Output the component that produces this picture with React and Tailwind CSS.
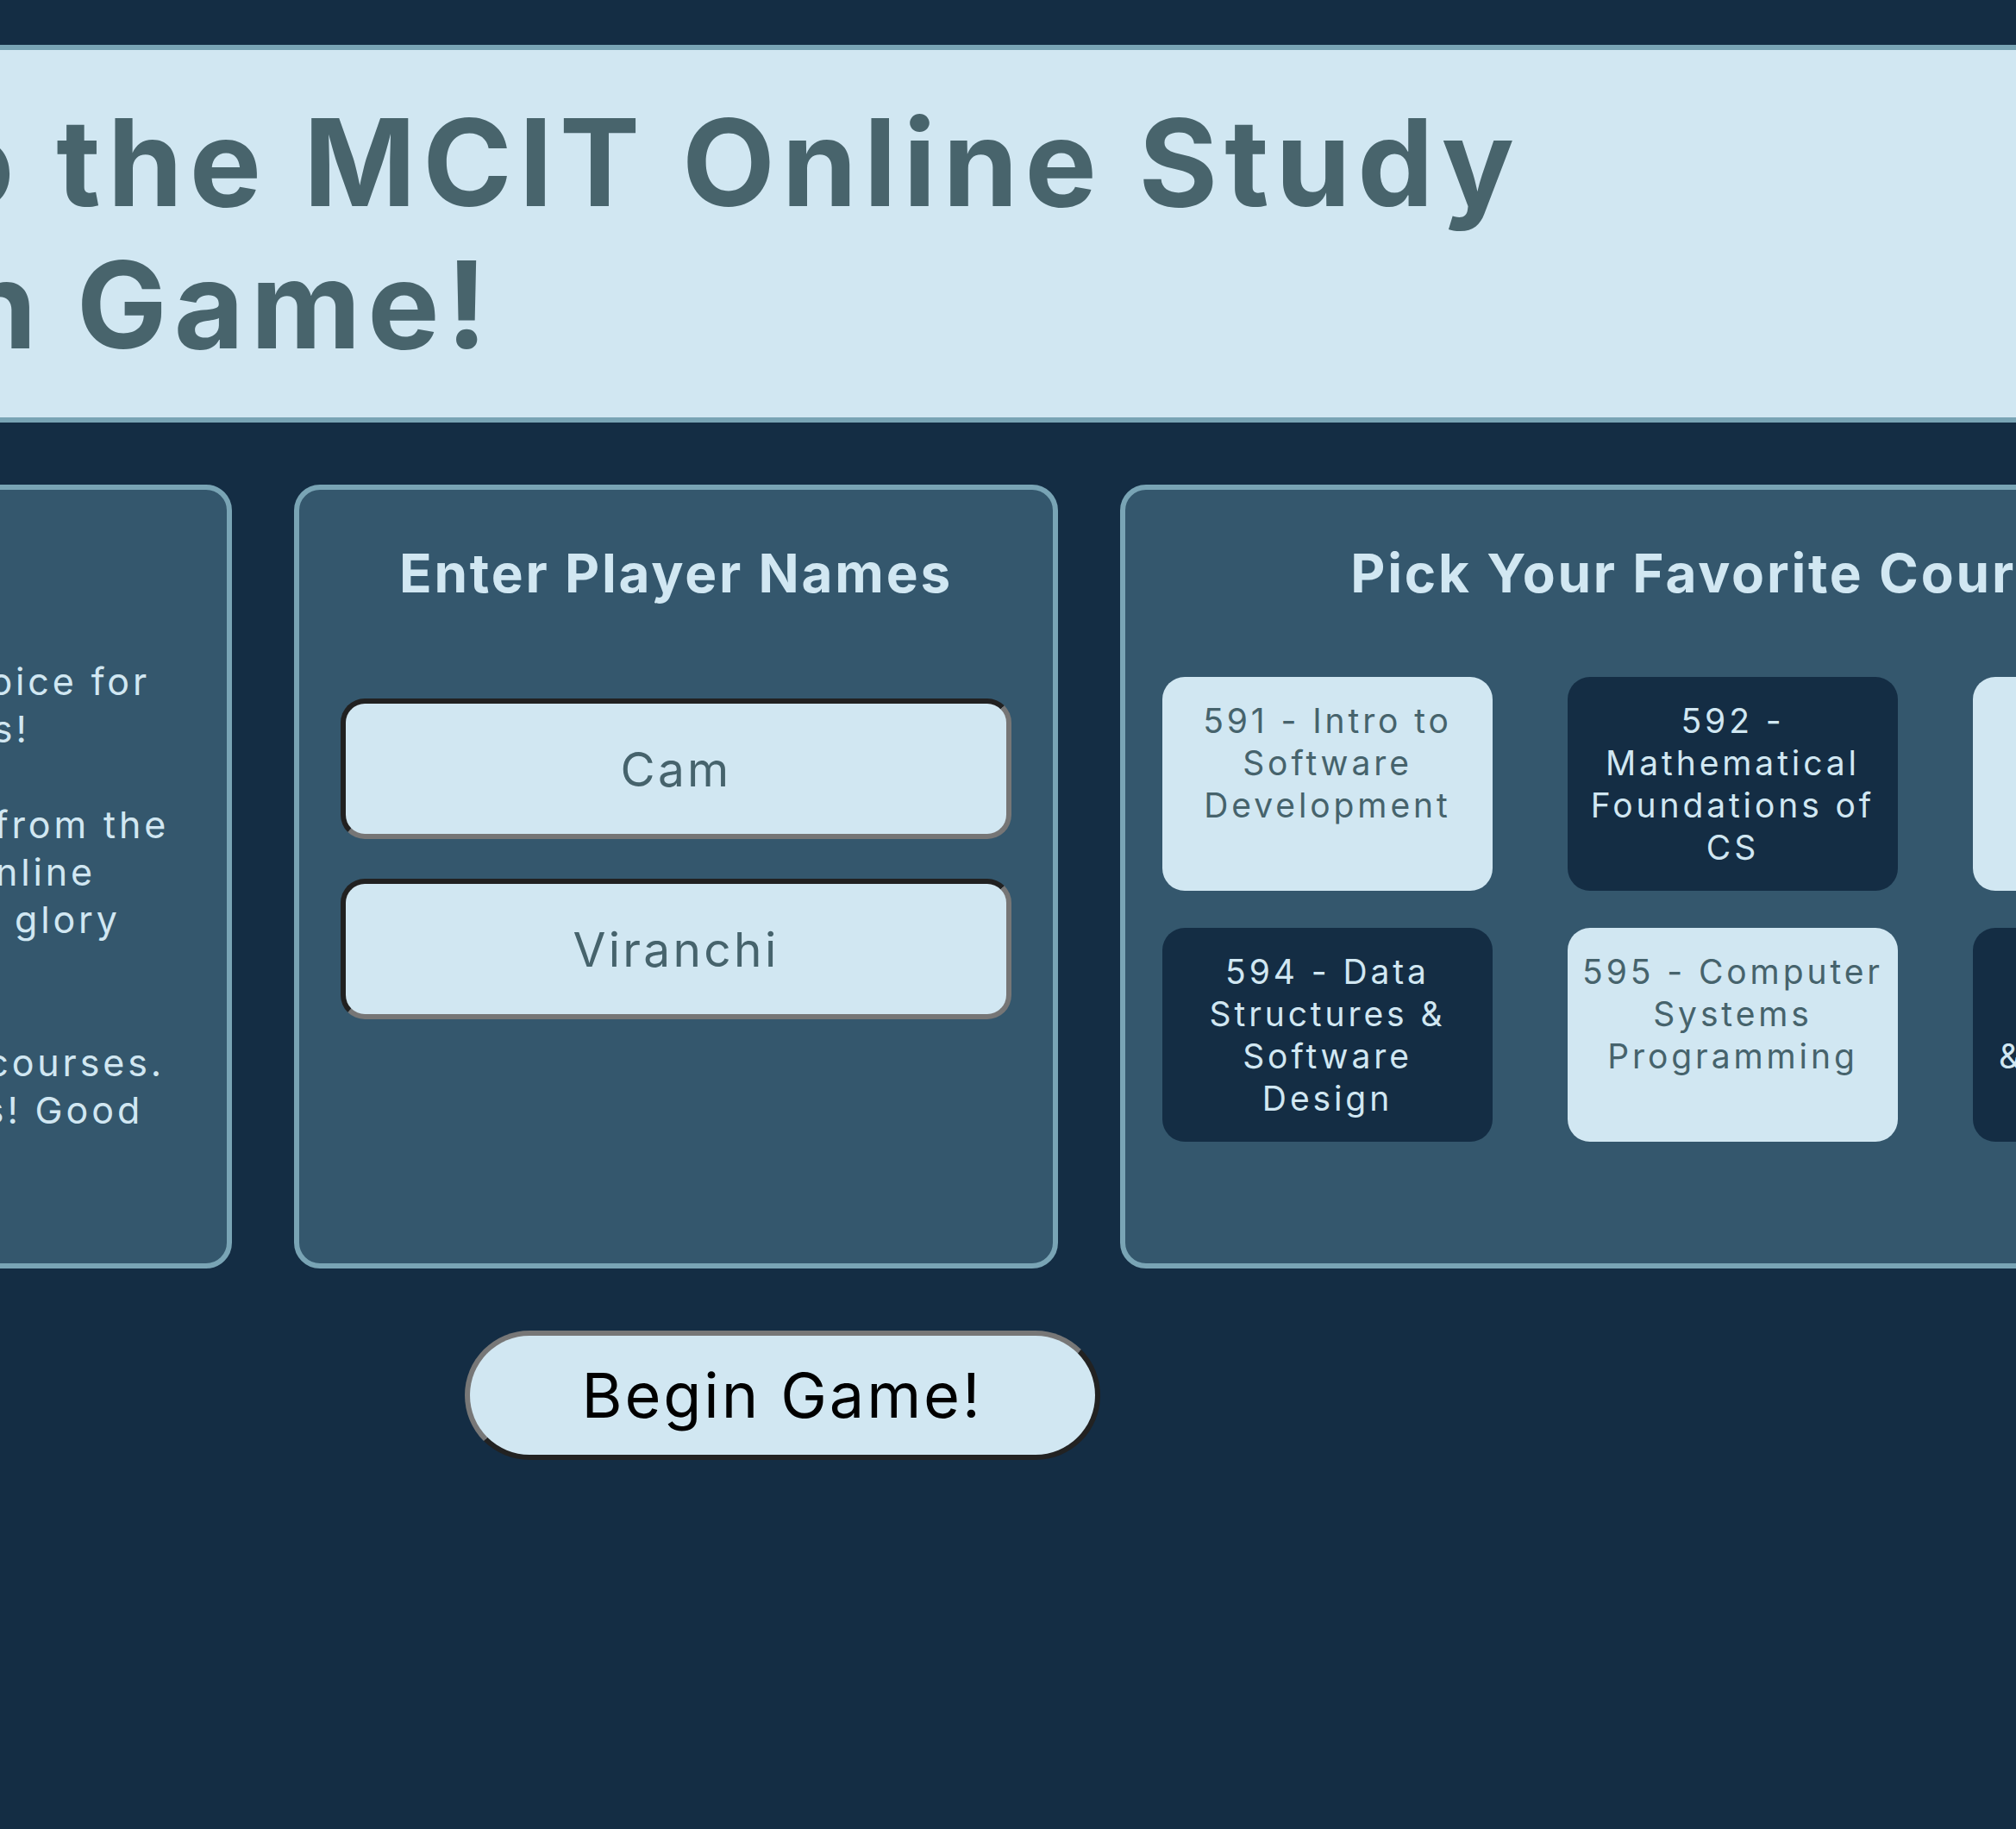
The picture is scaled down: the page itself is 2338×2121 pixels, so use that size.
import clsx from 'clsx'

const panel = 'shrink-0 rounded-[30px] border-[6px] border-[#79a4b5] bg-[#34576d] pt-[58px]'
const panelTitle = 'text-center text-[62px] leading-[78px] font-bold tracking-[0.045em] text-[#d1e7f2] whitespace-nowrap'

const courses = [
  { lines: ['591 - Intro to', 'Software', 'Development'], light: true },
  { lines: ['592 -', 'Mathematical', 'Foundations of', 'CS'], light: false },
  { lines: ['593 - Intro', 'to Computer', 'Systems'], light: true },
  { lines: ['594 - Data', 'Structures &', 'Software', 'Design'], light: false },
  { lines: ['595 - Computer', 'Systems', 'Programming'], light: true },
  { lines: ['596 -', 'Algorithms', '& Computation'], light: false },
]

const rules = [
  ['Players pick one course of their choice for', 'each round of study trivia questions!'],
  ['All take turns answering questions from the', 'core courses offered in the MCIT Online', 'programs. Answer correctly to earn glory', 'and points!'],
  ['Questions come from both chosen courses.', 'The top scorer wins bragging rights! Good', 'luck!'],
]

function CourseCard({ lines, light }) {
  return (
    <div
      className={clsx(
        'rounded-[26px] pt-[26px] pb-[26px] px-2 text-center text-[39px] leading-[49px] tracking-[0.1em] whitespace-nowrap',
        light ? 'bg-[#d1e7f2] text-[#46636c]' : 'bg-[#142d44] text-[#d1e7f2]'
      )}
    >
      {lines.map((l) => (
        <div key={l}>{l}</div>
      ))}
    </div>
  )
}

function NameInput({ value }) {
  return (
    <input
      readOnly
      value={value}
      className="block w-full h-[163px] rounded-[28px] border-[6px] border-t-[#212121] border-l-[#212121] border-b-[#767676] border-r-[#767676] bg-[#d1e7f2] text-center text-[55px] tracking-[0.06em] text-[#46636c] outline-none"
    />
  )
}

export default function App() {
  return (
    <div className="min-h-screen overflow-hidden bg-[#142d44] font-[Inter,sans-serif]">
      <div className="w-[3626px] -ml-[906px] pt-[52px] pb-[100px]">
        <header className="border-[6px] border-[#79a4b5] bg-[#d1e7f2] pl-[38px] py-[48px]">
          <h1 className="text-[140px] leading-[165px] font-bold tracking-[0.056em] text-[#48646c] whitespace-nowrap">
            Welcome to the MCIT Online Study
            <br />
            <span className="tracking-[0.046em]">Competition </span>Game!
          </h1>
        </header>

        <div className="mt-[72px] flex h-[909px] gap-[72px]">
          <section className={clsx(panel, 'w-[1175px] px-[48px]')}>
            <h2 className={panelTitle}>How to Play</h2>
            <div className="mt-[59px] flex flex-col gap-[56px] text-[43px] leading-[55px] tracking-[0.09em] text-[#d1e7f2]">
              {rules.map((p, i) => (
                <div key={i}>
                  {p.map((l) => (
                    <div key={l} className="whitespace-nowrap">{l}</div>
                  ))}
                </div>
              ))}
            </div>
          </section>

          <section className={clsx(panel, 'w-[886px] px-[48px]')}>
            <h2 className={panelTitle}>Enter Player Names</h2>
            <div className="mt-[106px] flex flex-col gap-[46px]">
              <NameInput value="Cam" />
              <NameInput value="Viranchi" />
            </div>
          </section>

          <section className={clsx(panel, 'w-[1421px] px-[43px]')}>
            <h2 className={panelTitle}>Pick Your Favorite Courses</h2>
            <div className="mt-[81px] grid grid-cols-3 gap-x-[87px] gap-y-[43px]">
              {courses.map((c) => (
                <CourseCard key={c.lines[0]} {...c} />
              ))}
            </div>
          </section>
        </div>

        <button className="mx-auto mt-[72px] block h-[150px] w-[737px] rounded-full border-[6px] border-t-[#777777] border-l-[#777777] border-b-[#222222] border-r-[#222222] bg-[#d1e7f2] text-[72px] tracking-[0.04em] text-black">
          Begin Game!
        </button>
      </div>
    </div>
  )
}
